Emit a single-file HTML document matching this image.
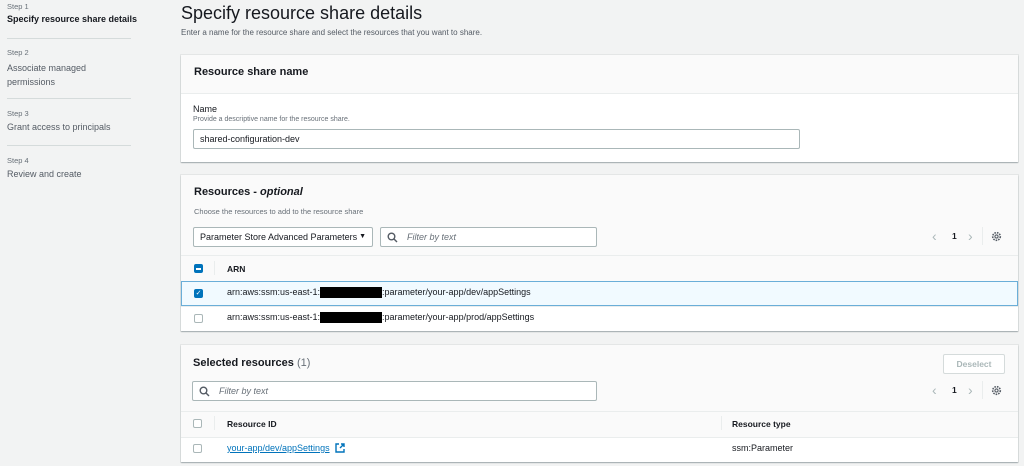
<html><head><style>
*{box-sizing:border-box;margin:0;padding:0}
body{width:1024px;height:466px;background:#f2f3f3;font-family:"Liberation Sans",sans-serif;color:#16191f;position:relative;overflow:hidden;font-size:9px}
.a{position:absolute}
.s{color:#687078;font-size:7.5px}
.card{position:absolute;left:181px;width:837px;background:#fafafa;box-shadow:0 1px 1px rgba(0,28,36,.3),0 0 0 1px #e4e6e6}
.h{font-weight:bold;font-size:11px}
.inp{position:absolute;background:#fff;border:1px solid #aab7b8;border-radius:2px;height:20px;font-size:9px;line-height:18px;padding-left:6px}
.row{position:absolute;left:0;width:837px;background:#fff;border-top:1px solid #eaeded}
.cb{position:absolute;width:9px;height:9px;border:1px solid #aab7b8;border-radius:2px;background:#fff}
.blk{display:inline-block;width:62px;height:11px;background:#000;vertical-align:middle}
.ph{font-style:italic;color:#687078;padding-left:20px}
.ch{position:absolute;color:#aab7b8;font-size:14px;line-height:14px}
</style></head><body>
<div class="a s" style="left:7px;top:2px">Step 1</div>
<div class="a" style="left:7px;top:14px;font-weight:bold;font-size:9px">Specify resource share details</div>
<div class="a" style="left:7px;top:38px;width:124px;border-top:1px solid #d5dbdb"></div>
<div class="a s" style="left:7px;top:48px">Step 2</div>
<div class="a" style="left:7px;top:61px;font-size:9px;color:#545b64;line-height:14px">Associate managed<br>permissions</div>
<div class="a" style="left:7px;top:98px;width:124px;border-top:1px solid #d5dbdb"></div>
<div class="a s" style="left:7px;top:109px">Step 3</div>
<div class="a" style="left:7px;top:122px;font-size:9px;color:#545b64">Grant access to principals</div>
<div class="a" style="left:7px;top:145px;width:124px;border-top:1px solid #d5dbdb"></div>
<div class="a s" style="left:7px;top:156px">Step 4</div>
<div class="a" style="left:7px;top:169px;font-size:9px;color:#545b64">Review and create</div>

<div class="a" style="left:181px;top:3px;font-size:18px">Specify resource share details</div>
<div class="a" style="left:181px;top:28px;font-size:8px;color:#545b64">Enter a name for the resource share and select the resources that you want to share.</div>

<div class="card" style="top:55px;height:107px">
 <div class="a h" style="left:13px;top:11px">Resource share name</div>
 <div class="a" style="left:0;top:38px;width:837px;height:69px;background:#fff;border-top:1px solid #eaeded"></div>
 <div class="a" style="left:12px;top:49px;font-size:9px">Name</div>
 <div class="a s" style="left:12px;top:61px;font-size:7px">Provide a descriptive name for the resource share.</div>
 <div class="inp" style="left:12px;top:74px;width:607px">shared-configuration-dev</div>
</div>

<div class="card" style="top:175px;height:156px">
 <div class="a h" style="left:13px;top:11px">Resources - <i>optional</i></div>
 <div class="a s" style="left:13px;top:32px;font-size:7.5px">Choose the resources to add to the resource share</div>
 <div class="inp" style="left:12px;top:52px;width:180px;color:#16191f">Parameter Store Advanced Parameters <span style="position:absolute;right:6px;font-size:7px">▼</span></div>
 <div class="inp" style="left:199px;top:52px;width:217px"><svg class="a" style="left:6px;top:4px" width="11" height="11" viewBox="0 0 11 11"><circle cx="4.5" cy="4.5" r="3.3" fill="none" stroke="#545b64" stroke-width="1.4"/><path d="M7 7l3 3" stroke="#545b64" stroke-width="1.4"/></svg><span class="ph">Filter by text</span></div>
 <div class="ch" style="left:751px;top:54px">‹</div>
 <div class="a" style="left:771px;top:56px;font-weight:bold;font-size:8.5px">1</div>
 <div class="ch" style="left:787px;top:54px">›</div>
 <div class="a" style="left:801px;top:52px;height:18px;border-left:1px solid #eaeded"></div>
 <svg class="a" style="left:810px;top:56px" width="11" height="11" viewBox="0 0 11 11"><circle cx="5.5" cy="5.5" r="3.8" fill="none" stroke="#545b64" stroke-width="1.6" stroke-dasharray="1.6 1"/><circle cx="5.5" cy="5.5" r="1.6" fill="none" stroke="#545b64" stroke-width="1.1"/></svg>
 <div class="a" style="left:0;top:80px;width:837px;height:26px;border-top:1px solid #eaeded"></div>
 <div class="cb" style="left:13px;top:89px;background:#0073bb;border-color:#0073bb"><div style="position:absolute;left:1px;top:3px;width:5px;height:1.5px;background:#fff"></div></div>
 <div class="a" style="left:33px;top:86px;height:14px;border-left:1px solid #eaeded"></div>
 <div class="a" style="left:46px;top:89px;font-weight:bold;font-size:8.5px">ARN</div>
 <div class="row" style="top:106px;height:25px;background:#f1faff;border:1px solid #6aaed8"></div>
 <div class="cb" style="left:13px;top:114px;background:#0073bb;border-color:#0073bb;color:#fff;font-size:7px;line-height:7px;text-align:center">✓</div>
 <div class="a" style="left:46px;top:112px;font-size:9px;color:#16191f">arn:aws:ssm:us-east-1:<span class="blk"></span>:parameter/your-app/dev/appSettings</div>
 <div class="row" style="top:131px;height:25px"></div>
 <div class="cb" style="left:13px;top:139px"></div>
 <div class="a" style="left:46px;top:137px;font-size:9px">arn:aws:ssm:us-east-1:<span class="blk"></span>:parameter/your-app/prod/appSettings</div>
</div>

<div class="card" style="top:345px;height:117px">
 <div class="a h" style="left:12px;top:12px">Selected resources <span style="font-weight:normal;color:#687078">(1)</span></div>
 <div class="a" style="left:762px;top:9px;width:62px;height:20px;border:1px solid #d5dbdb;background:#fff;color:#aab7b8;font-weight:bold;font-size:8.5px;text-align:center;line-height:18px;border-radius:2px">Deselect</div>
 <div class="inp" style="left:11px;top:36px;width:405px"><svg class="a" style="left:6px;top:4px" width="11" height="11" viewBox="0 0 11 11"><circle cx="4.5" cy="4.5" r="3.3" fill="none" stroke="#545b64" stroke-width="1.4"/><path d="M7 7l3 3" stroke="#545b64" stroke-width="1.4"/></svg><span class="ph">Filter by text</span></div>
 <div class="ch" style="left:751px;top:38px">‹</div>
 <div class="a" style="left:771px;top:40px;font-weight:bold;font-size:8.5px">1</div>
 <div class="ch" style="left:787px;top:38px">›</div>
 <div class="a" style="left:801px;top:36px;height:18px;border-left:1px solid #eaeded"></div>
 <svg class="a" style="left:810px;top:40px" width="11" height="11" viewBox="0 0 11 11"><circle cx="5.5" cy="5.5" r="3.8" fill="none" stroke="#545b64" stroke-width="1.6" stroke-dasharray="1.6 1"/><circle cx="5.5" cy="5.5" r="1.6" fill="none" stroke="#545b64" stroke-width="1.1"/></svg>
 <div class="a" style="left:0;top:66px;width:837px;height:26px;border-top:1px solid #eaeded"></div>
 <div class="cb" style="left:12px;top:74px"></div>
 <div class="a" style="left:33px;top:71px;height:14px;border-left:1px solid #eaeded"></div>
 <div class="a" style="left:46px;top:74px;font-weight:bold;font-size:8.5px">Resource ID</div>
 <div class="a" style="left:540px;top:71px;height:14px;border-left:1px solid #eaeded"></div>
 <div class="a" style="left:551px;top:74px;font-weight:bold;font-size:8.5px">Resource type</div>
 <div class="row" style="top:92px;height:25px"></div>
 <div class="cb" style="left:12px;top:99px"></div>
 <div class="a" style="left:46px;top:98px;font-size:9px;color:#0073bb;text-decoration:underline">your-app/dev/appSettings</div>
 <svg class="a" style="left:154px;top:98px" width="10" height="10" viewBox="0 0 10 10"><path d="M4 1H1v8h8V6" fill="none" stroke="#0073bb" stroke-width="1.4"/><path d="M5 5l4-4M6 1h3v3" fill="none" stroke="#0073bb" stroke-width="1.4"/></svg>
 <div class="a" style="left:551px;top:98px;font-size:9px">ssm:Parameter</div>
</div>
</body></html>
